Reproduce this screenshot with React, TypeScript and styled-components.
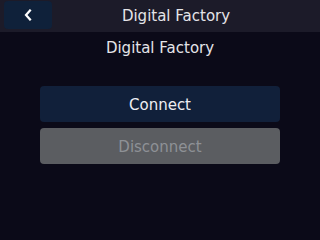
import React from "react";
import styled, { createGlobalStyle } from "styled-components";

const Global = createGlobalStyle`
  html, body { margin: 0; padding: 0; }
  body { background: #0b0a18; font-family: "DejaVu Sans", "Noto Sans", sans-serif; }
`;

const Screen = styled.div`
  width: 320px;
  height: 240px;
  background: #0b0a18;
  display: flex;
  flex-direction: column;
  overflow: hidden;
`;

const Header = styled.div`
  height: 32px;
  background: #1c1b29;
  display: flex;
  align-items: center;
  padding: 0 4px;
  box-sizing: border-box;
`;

const BackButton = styled.button`
  width: 48px;
  height: 28px;
  border: none;
  border-radius: 4px;
  background: #0f213a;
  display: flex;
  align-items: center;
  justify-content: center;
  padding: 0;
  margin-top: -2px;
`;

const HeaderTitle = styled.div`
  flex: 1;
  text-align: center;
  color: #e4e4e8;
  font-size: 15px;
  margin-right: 16px;
  margin-top: -1px;
`;

const Subtitle = styled.div`
  color: #e4e4e8;
  font-size: 15px;
  text-align: center;
  margin-top: 7px;
`;

const Actions = styled.div`
  display: flex;
  flex-direction: column;
  gap: 6px;
  padding: 0 40px;
  margin-top: 29px;
`;

const ActionButton = styled.button<{ $disabled?: boolean }>`
  height: 36px;
  border: none;
  border-radius: 4px;
  background: ${(p) => (p.$disabled ? "#5b5d61" : "#11203a")};
  color: ${(p) => (p.$disabled ? "#8e9196" : "#eeeef2")};
  font-family: inherit;
  font-size: 15px;
  padding: 1px 0 0;
`;

export default function App() {
  return (
    <>
      <Global />
      <Screen>
        <Header>
          <BackButton aria-label="Back">
            <svg width="8" height="12" viewBox="0 0 8 12">
              <path d="M6 1.5 L2 6 L6 10.5" fill="none" stroke="#ffffff" strokeWidth="2.2" strokeLinecap="square" />
            </svg>
          </BackButton>
          <HeaderTitle>Digital Factory</HeaderTitle>
        </Header>
        <Subtitle>Digital Factory</Subtitle>
        <Actions>
          <ActionButton>Connect</ActionButton>
          <ActionButton $disabled>Disconnect</ActionButton>
        </Actions>
      </Screen>
    </>
  );
}
